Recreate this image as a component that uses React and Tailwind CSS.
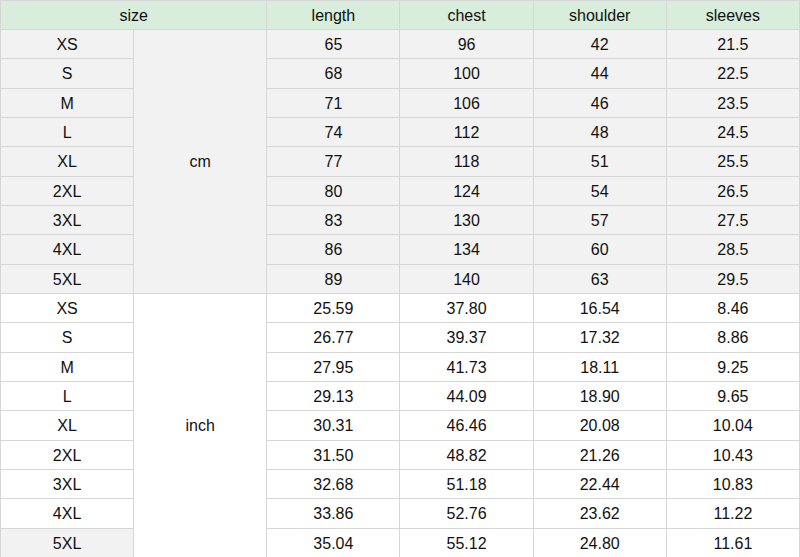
import React from "react";

const CM = [
  ["XS", "65", "96", "42", "21.5"],
  ["S", "68", "100", "44", "22.5"],
  ["M", "71", "106", "46", "23.5"],
  ["L", "74", "112", "48", "24.5"],
  ["XL", "77", "118", "51", "25.5"],
  ["2XL", "80", "124", "54", "26.5"],
  ["3XL", "83", "130", "57", "27.5"],
  ["4XL", "86", "134", "60", "28.5"],
  ["5XL", "89", "140", "63", "29.5"],
];

const INCH = [
  ["XS", "25.59", "37.80", "16.54", "8.46"],
  ["S", "26.77", "39.37", "17.32", "8.86"],
  ["M", "27.95", "41.73", "18.11", "9.25"],
  ["L", "29.13", "44.09", "18.90", "9.65"],
  ["XL", "30.31", "46.46", "20.08", "10.04"],
  ["2XL", "31.50", "48.82", "21.26", "10.43"],
  ["3XL", "32.68", "51.18", "22.44", "10.83"],
  ["4XL", "33.86", "52.76", "23.62", "11.22"],
  ["5XL", "35.04", "55.12", "24.80", "11.61"],
];

const cell = "border border-[#d6d6d6] text-center align-middle p-0 pt-[2px]";

function Section({ rows, unit, gray }) {
  return rows.map((r, i) => (
    <tr key={unit + r[0]} className={`h-[29.33px] ${gray ? "bg-[#f2f2f2]" : "bg-white"}`}>
      <td className={`${cell} ${!gray && i === rows.length - 1 ? "bg-[#f2f2f2]" : ""}`}>{r[0]}</td>
      {i === 0 && (
        <td rowSpan={rows.length} className={cell}>
          {unit}
        </td>
      )}
      {r.slice(1).map((v, j) => (
        <td key={j} className={cell}>
          {v}
        </td>
      ))}
    </tr>
  ));
}

export default function App() {
  return (
    <div className="w-[800px] h-[557px] bg-white overflow-hidden">
      <table
        className="w-[800px] table-fixed border-collapse text-[16px] text-[#111]"
        style={{ fontFamily: '"Liberation Sans", Arial, sans-serif' }}
      >
        <thead>
          <tr className="h-[29px] bg-[#d8eddb]">
            <th colSpan={2} className={`${cell} font-normal`}>size</th>
            <th className={`${cell} font-normal`}>length</th>
            <th className={`${cell} font-normal`}>chest</th>
            <th className={`${cell} font-normal`}>shoulder</th>
            <th className={`${cell} font-normal`}>sleeves</th>
          </tr>
        </thead>
        <tbody>
          <Section rows={CM} unit="cm" gray />
          <Section rows={INCH} unit="inch" />
        </tbody>
      </table>
    </div>
  );
}
